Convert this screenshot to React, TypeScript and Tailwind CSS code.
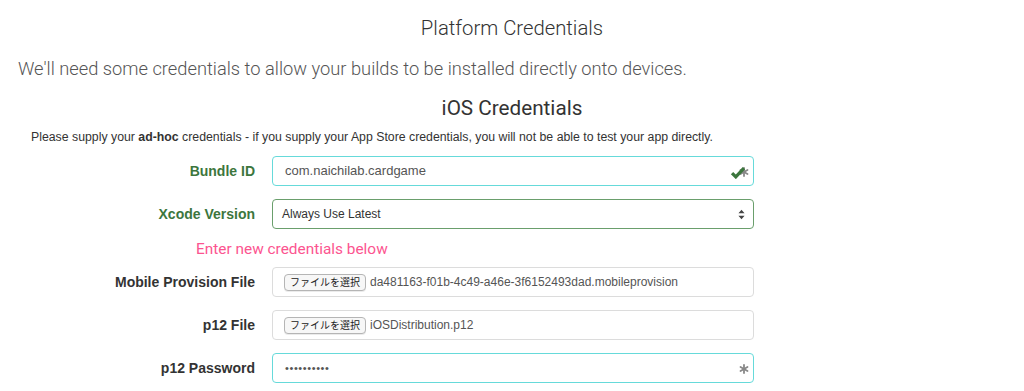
const fieldBase =
  'h-[30px] w-[482px] rounded-[4px] border bg-white flex items-center relative'

function Asterisk({ className }: { className?: string }) {
  return (
    <svg viewBox="0 0 10 10" className={className} width="10" height="10">
      <g stroke="#888" strokeWidth="1.8" strokeLinecap="round">
        <line x1="5" y1="1" x2="5" y2="9" />
        <line x1="1.5" y1="3" x2="8.5" y2="7" />
        <line x1="1.5" y1="7" x2="8.5" y2="3" />
      </g>
    </svg>
  )
}

function FileButton() {
  return (
    <span className="inline-flex items-center h-[17px] px-[5px] rounded-[4px] border border-[#b5b5b5] bg-[#f7f7f7] text-[10px] text-[#222] font-['Noto_Sans_CJK_JP',sans-serif] leading-none shadow-[0_1px_0_rgba(0,0,0,0.08)]">
      ファイルを選択
    </span>
  )
}

function Row({
  label,
  green,
  children,
}: {
  label: string
  green?: boolean
  children: React.ReactNode
}) {
  return (
    <div className="flex items-center">
      <label
        className={`w-[255px] text-right text-[14px] font-bold font-['Liberation_Sans',Arial,sans-serif] ${
          green ? 'text-[#3c763d]' : 'text-[#333]'
        }`}
      >
        {label}
      </label>
      <div className="ml-[17px]">{children}</div>
    </div>
  )
}

export default function App() {
  return (
    <div className="w-[1024px] h-[391px] overflow-hidden bg-white font-['Roboto',sans-serif]">
      <h1 className="pt-[14px] text-center text-[20.3px] font-light text-[#333] leading-[28px]">
        Platform Credentials
      </h1>
      <p className="mt-[15px] pl-[18px] text-[18.3px] font-light text-[#555] leading-[24px]">
        We'll need some credentials to allow your builds to be installed directly onto devices.
      </p>
      <h2 className="mt-[14px] text-center text-[20.7px] text-[#333] leading-[26px]">
        iOS Credentials
      </h2>
      <p className="mt-[9px] pl-[31px] text-[12.3px] text-[#333] font-['Liberation_Sans',Arial,sans-serif] leading-[14px]">
        Please supply your <b>ad-hoc</b> credentials - if you supply your App Store credentials, you
        will not be able to test your app directly.
      </p>

      <div className="mt-[12px] flex flex-col gap-[13px]">
        <Row label="Bundle ID" green>
          <div className={`${fieldBase} border-[#66dada] px-[12px]`}>
            <span className="text-[13px] text-[#555] font-['Liberation_Sans',Arial,sans-serif]">
              com.naichilab.cardgame
            </span>
            <Asterisk className="absolute right-[4px] top-[10px]" />
            <svg
              viewBox="0 0 14 12"
              width="16"
              height="13"
              className="absolute right-[7px] top-[9px]"
            >
              <path d="M1.5 6.5 L5 10 L12.5 2" fill="none" stroke="#3c763d" strokeWidth="3" />
            </svg>
          </div>
        </Row>
        <Row label="Xcode Version" green>
          <div className={`${fieldBase} border-[#6a9f6c] px-[9px]`}>
            <span className="text-[12px] text-[#333] font-['Liberation_Sans',Arial,sans-serif]">
              Always Use Latest
            </span>
            <svg
              viewBox="0 0 8 12"
              width="7"
              height="11"
              className="absolute right-[8px] top-[9px]"
            >
              <path d="M4 0.5 L7.5 4.5 L0.5 4.5 Z M4 11.5 L7.5 7.5 L0.5 7.5 Z" fill="#444" />
            </svg>
          </div>
        </Row>
      </div>

      <p className="mt-[10px] pl-[196px] text-[15.4px] text-[#fc5490] leading-[20px]">
        Enter new credentials below
      </p>

      <div className="mt-[8px] flex flex-col gap-[13px]">
        <Row label="Mobile Provision File">
          <div className={`${fieldBase} border-[#dcdcdc] pl-[11px] gap-[4px]`}>
            <FileButton />
            <span className="text-[12px] text-[#555] font-['Liberation_Sans',Arial,sans-serif]">
              da481163-f01b-4c49-a46e-3f6152493dad.mobileprovision
            </span>
          </div>
        </Row>
        <Row label="p12 File">
          <div className={`${fieldBase} border-[#dcdcdc] pl-[11px] gap-[4px]`}>
            <FileButton />
            <span className="text-[12px] text-[#555] font-['Liberation_Sans',Arial,sans-serif]">
              iOSDistribution.p12
            </span>
          </div>
        </Row>
        <Row label="p12 Password">
          <div className={`${fieldBase} border-[#66dada] px-[12px]`}>
            <span className="text-[11px] text-[#555] tracking-[0.6px] font-['Liberation_Sans',Arial,sans-serif]">
              ••••••••••
            </span>
            <Asterisk className="absolute right-[4px] top-[10px]" />
          </div>
        </Row>
      </div>
    </div>
  )
}
